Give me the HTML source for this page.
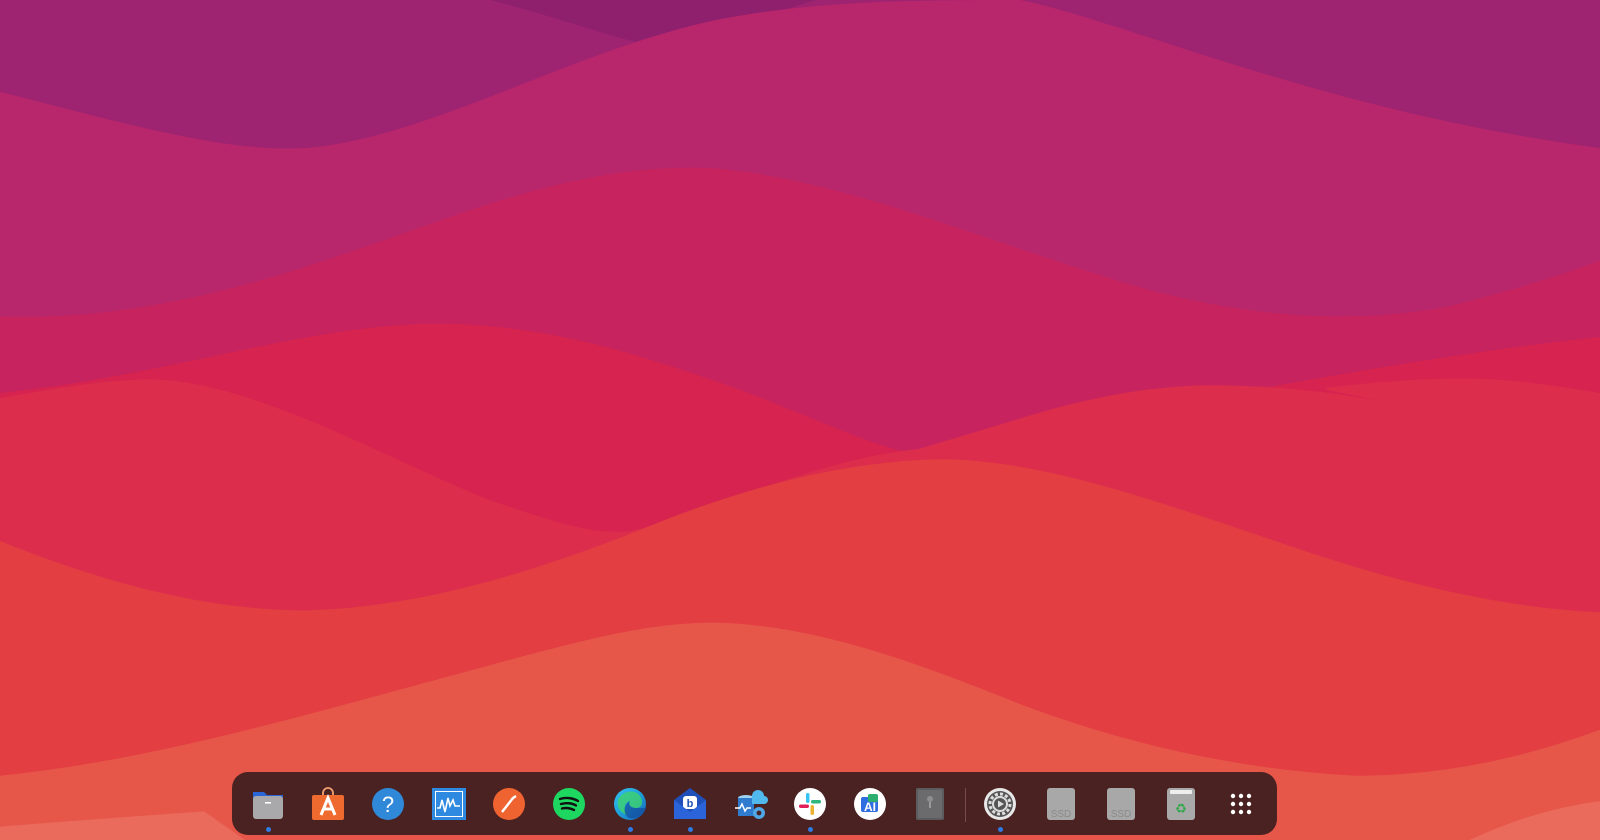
<!DOCTYPE html>
<html><head><meta charset="utf-8"><style>
html,body{margin:0;padding:0;width:1600px;height:840px;overflow:hidden;background:#9c2470;font-family:"Liberation Sans",sans-serif}
svg.bg{position:absolute;left:0;top:0;width:1600px;height:840px}
.dock{position:absolute;left:232px;top:772px;width:1045px;height:63px;background:#4a2222;border-radius:16px;}
.ic{position:absolute;top:14px;width:36px;height:36px;}
.ic svg{width:36px;height:36px;display:block}
.dot{position:absolute;top:55px;width:5px;height:5px;border-radius:50%;background:#2f7ae5}
.sep{position:absolute;left:733px;top:16px;width:1px;height:34px;background:#7a4a48}
</style></head><body>
<svg class="bg" viewBox="0 0 1568 823" preserveAspectRatio="none">
<rect width="1568" height="823" fill="#9e2472"/>
<path d="M480,0 C560,20 620,45 650,45 C700,40 760,10 800,0 Z" fill="#8f206e"/>
<path d="M0,90 C120,120 220,150 300,145 C420,135 560,50 700,20 C800,0 900,0 1000,0 L1000,0 C1100,20 1300,110 1568,145 L1568,823 L0,823 Z" fill="#b8266c"/>
<path d="M0,0 L230,0 C300,30 400,60 520,60 C580,60 620,45 650,40 L700,20 C600,60 500,110 400,130 Z" fill="#a8246f" opacity="0"/>
<path d="M0,310 C150,315 280,270 420,220 C530,180 620,160 700,165 C820,175 950,230 1080,270 C1200,310 1320,320 1420,300 C1480,285 1530,270 1568,255 L1568,823 L0,823 Z" fill="#c7245f"/>
<path d="M0,385 C150,370 280,325 400,318 C520,312 620,345 720,380 C800,410 860,440 900,445 C1050,420 1300,360 1568,330 L1568,823 L0,823 Z" fill="#d6234f"/>
<path d="M0,390 C60,380 110,370 160,372 C260,380 380,450 480,490 C540,510 580,525 620,520 C700,500 800,450 900,440 L1000,410 C1080,385 1150,375 1210,378 C1300,380 1380,395 1450,420 C1500,440 1540,455 1568,465 L1568,823 L0,823 Z" fill="#dc2d4c"/>
<path d="M1300,380 C1380,370 1450,368 1500,375 C1540,380 1568,385 1568,385 L1568,470 C1500,440 1400,400 1300,382 Z" fill="#dc2d4c"/>
<path d="M0,530 C100,570 200,598 300,598 C420,595 540,555 650,510 C740,475 830,452 920,450 C1020,450 1130,490 1250,530 C1350,565 1460,595 1568,600 L1568,823 L0,823 Z" fill="#e33e42"/>
<path d="M0,760 C150,745 300,700 450,660 C560,630 630,610 700,610 C800,612 900,650 1000,690 C1120,735 1230,755 1330,760 C1420,760 1500,740 1568,715 L1568,823 L0,823 Z" fill="#e6574a"/>
<path d="M1440,823 C1490,800 1530,790 1568,785 L1568,823 Z" fill="#ea6b5c"/>
<path d="M0,823 L0,810 C60,805 130,800 200,795 L240,823 Z" fill="#ea6b5c"/>
</svg>
<div class="dock">
 <!-- folder -->
 <div class="ic" style="left:18px"><svg viewBox="0 0 36 36"><path d="M3,6 h11 l3,3 h16 v6 H3z" fill="#2a66d6"/><rect x="3" y="10" width="30" height="23" rx="3" fill="#a9a9ab"/><rect x="15" y="16" width="6" height="1.6" fill="#fff"/></svg></div>
 <div class="dot" style="left:34px"></div>
 <!-- app store -->
 <div class="ic" style="left:78px"><svg viewBox="0 0 36 36"><path d="M13,10 v-3 a5,5 0 0 1 10,0 v3" stroke="#f3a070" stroke-width="1.8" fill="none"/><rect x="2" y="9" width="32" height="25" rx="2" fill="#ee6a2f"/><path d="M11,29 L18,12 L25,29 M13,23 h10" stroke="#fff" stroke-width="3" fill="none"/></svg></div>
 <!-- help -->
 <div class="ic" style="left:138px"><svg viewBox="0 0 36 36"><circle cx="18" cy="18" r="16" fill="#2f88d8"/><text x="18" y="26" font-size="22" fill="#fff" text-anchor="middle" font-family="Liberation Sans">?</text></svg></div>
 <!-- monitor -->
 <div class="ic" style="left:199px"><svg viewBox="0 0 36 36"><rect x="1" y="2" width="34" height="32" fill="#2d8ae0"/><rect x="4" y="5" width="28" height="26" fill="#fff"/><rect x="5" y="6" width="26" height="24" fill="#2d8ae0"/><path d="M6,22 h3 l2,-8 l3,12 l3,-14 l2,8 l3,-6 l2,6 h5" stroke="#fff" stroke-width="1.6" fill="none"/></svg></div>
 <!-- postman -->
 <div class="ic" style="left:259px"><svg viewBox="0 0 36 36"><circle cx="18" cy="18" r="16" fill="#ef6330"/><path d="M11,26 L22,12 L25,10" stroke="#fff" stroke-width="2.5" fill="none"/></svg></div>
 <!-- spotify -->
 <div class="ic" style="left:319px"><svg viewBox="0 0 36 36"><circle cx="18" cy="18" r="16" fill="#1ed760"/><path d="M9,13 C15,11 22,12 27,15 M10,18 C15,16.5 21,17 25,19.5 M11,22.5 C15,21.5 19,22 23,24" stroke="#111" stroke-width="2.4" fill="none" stroke-linecap="round"/></svg></div>
 <!-- edge -->
 <div class="ic" style="left:380px"><svg viewBox="0 0 36 36"><defs><linearGradient id="eg" x1="0" y1="0" x2="1" y2="1"><stop offset="0" stop-color="#35c1f1"/><stop offset="0.5" stop-color="#1e9fd8"/><stop offset="1" stop-color="#1b5fb8"/></linearGradient></defs><circle cx="18" cy="18" r="16" fill="url(#eg)"/><path d="M28,10 C32,16 30,22 24,22 C18,22 16,18 18,15 C12,16 11,24 16,29 C10,28 4,22 6,14 C10,4 24,3 28,10z" fill="#3fd26b" opacity="0.8"/><path d="M18,15 C16,18 18,22 24,22 L34,22 C32,30 24,34 17,32 C10,28 12,18 18,15z" fill="#134b9c" opacity="0.7"/></svg></div>
 <div class="dot" style="left:396px"></div>
 <!-- mail -->
 <div class="ic" style="left:440px"><svg viewBox="0 0 36 36"><path d="M2,14 L18,2 L34,14 V33 H2z" fill="#1f4fb8"/><rect x="11" y="10" width="14" height="13" rx="3" fill="#fff"/><text x="18" y="21" font-size="11" font-weight="bold" fill="#1f4fb8" text-anchor="middle">b</text><path d="M2,14 L18,26 L34,14 V33 H2z" fill="#2a64d8"/></svg></div>
 <div class="dot" style="left:456px"></div>
 <!-- azure -->
 <div class="ic" style="left:500px"><svg viewBox="0 0 36 36"><ellipse cx="14" cy="12" rx="8" ry="3" fill="#9ed4f0"/><rect x="6" y="12" width="16" height="18" fill="#2f7bd0"/><path d="M20,10 a6,6 0 0 1 12,0 a4,4 0 0 1 0,8 h-12z" fill="#52b9ef"/><path d="M3,22 h5 l2,-4 l3,7 l2,-3 h4" stroke="#fff" stroke-width="1.5" fill="none"/><circle cx="27" cy="27" r="6" fill="#4fa7e6"/><circle cx="27" cy="27" r="2.4" fill="#4a2222"/></svg></div>
 <!-- slack -->
 <div class="ic" style="left:560px"><svg viewBox="0 0 36 36"><circle cx="18" cy="18" r="16" fill="#fff"/><rect x="14" y="7" width="3.5" height="10" rx="1.7" fill="#36c5f0"/><rect x="19" y="14" width="10" height="3.5" rx="1.7" fill="#2eb67d"/><rect x="18.5" y="19" width="3.5" height="10" rx="1.7" fill="#ecb22e"/><rect x="7" y="18.5" width="10" height="3.5" rx="1.7" fill="#e01e5a"/></svg></div>
 <div class="dot" style="left:576px"></div>
 <!-- AI -->
 <div class="ic" style="left:620px"><svg viewBox="0 0 36 36"><circle cx="18" cy="18" r="16" fill="#fff"/><rect x="9" y="11" width="17" height="15" rx="2" fill="#2e6ee0"/><rect x="16" y="8" width="10" height="8" rx="2" fill="#2cae6e"/><text x="18" y="25" font-size="12" font-weight="bold" fill="#fff" text-anchor="middle">AI</text></svg></div>
 <!-- vault -->
 <div class="ic" style="left:680px"><svg viewBox="0 0 36 36"><rect x="4" y="2" width="28" height="32" rx="2" fill="#5c5c5e"/><rect x="6" y="4" width="24" height="28" fill="#6b6b6d"/><circle cx="18" cy="13" r="3" fill="#8e8e90"/><path d="M18,16 v6" stroke="#aaa" stroke-width="1.5"/></svg></div>
 <div class="sep"></div>
 <!-- settings -->
 <div class="ic" style="left:750px"><svg viewBox="0 0 36 36"><circle cx="18" cy="18" r="16" fill="#e8e8e8"/><circle cx="18" cy="18" r="13" fill="#555"/><circle cx="18" cy="18" r="10" fill="none" stroke="#ddd" stroke-width="3" stroke-dasharray="3 2.2"/><circle cx="18" cy="18" r="7" fill="none" stroke="#ddd" stroke-width="2"/><path d="M16,14.5 L22,18 L16,21.5z" fill="#ddd"/></svg></div>
 <div class="dot" style="left:766px"></div>
 <!-- SSD -->
 <div class="ic" style="left:811px"><svg viewBox="0 0 36 36"><rect x="4" y="2" width="28" height="32" rx="3" fill="#a8a8a8"/><text x="18" y="31" font-size="10" fill="#8a8a8a" text-anchor="middle">SSD</text></svg></div>
 <div class="ic" style="left:871px"><svg viewBox="0 0 36 36"><rect x="4" y="2" width="28" height="32" rx="3" fill="#a8a8a8"/><text x="18" y="31" font-size="10" fill="#8a8a8a" text-anchor="middle">SSD</text></svg></div>
 <!-- trash -->
 <div class="ic" style="left:931px"><svg viewBox="0 0 36 36"><rect x="4" y="2" width="28" height="32" rx="3" fill="#a9a9a9"/><rect x="7" y="4" width="22" height="4" rx="1" fill="#eee"/><text x="18" y="27" font-size="13" fill="#2fa84a" text-anchor="middle">♻</text></svg></div>
 <!-- grid -->
 <div class="ic" style="left:991px"><svg viewBox="0 0 36 36"><g fill="#fff"><circle cx="10" cy="10" r="2.2"/><circle cx="18" cy="10" r="2.2"/><circle cx="26" cy="10" r="2.2"/><circle cx="10" cy="18" r="2.2"/><circle cx="18" cy="18" r="2.2"/><circle cx="26" cy="18" r="2.2"/><circle cx="10" cy="26" r="2.2"/><circle cx="18" cy="26" r="2.2"/><circle cx="26" cy="26" r="2.2"/></g></svg></div>
</div>
</body></html>
